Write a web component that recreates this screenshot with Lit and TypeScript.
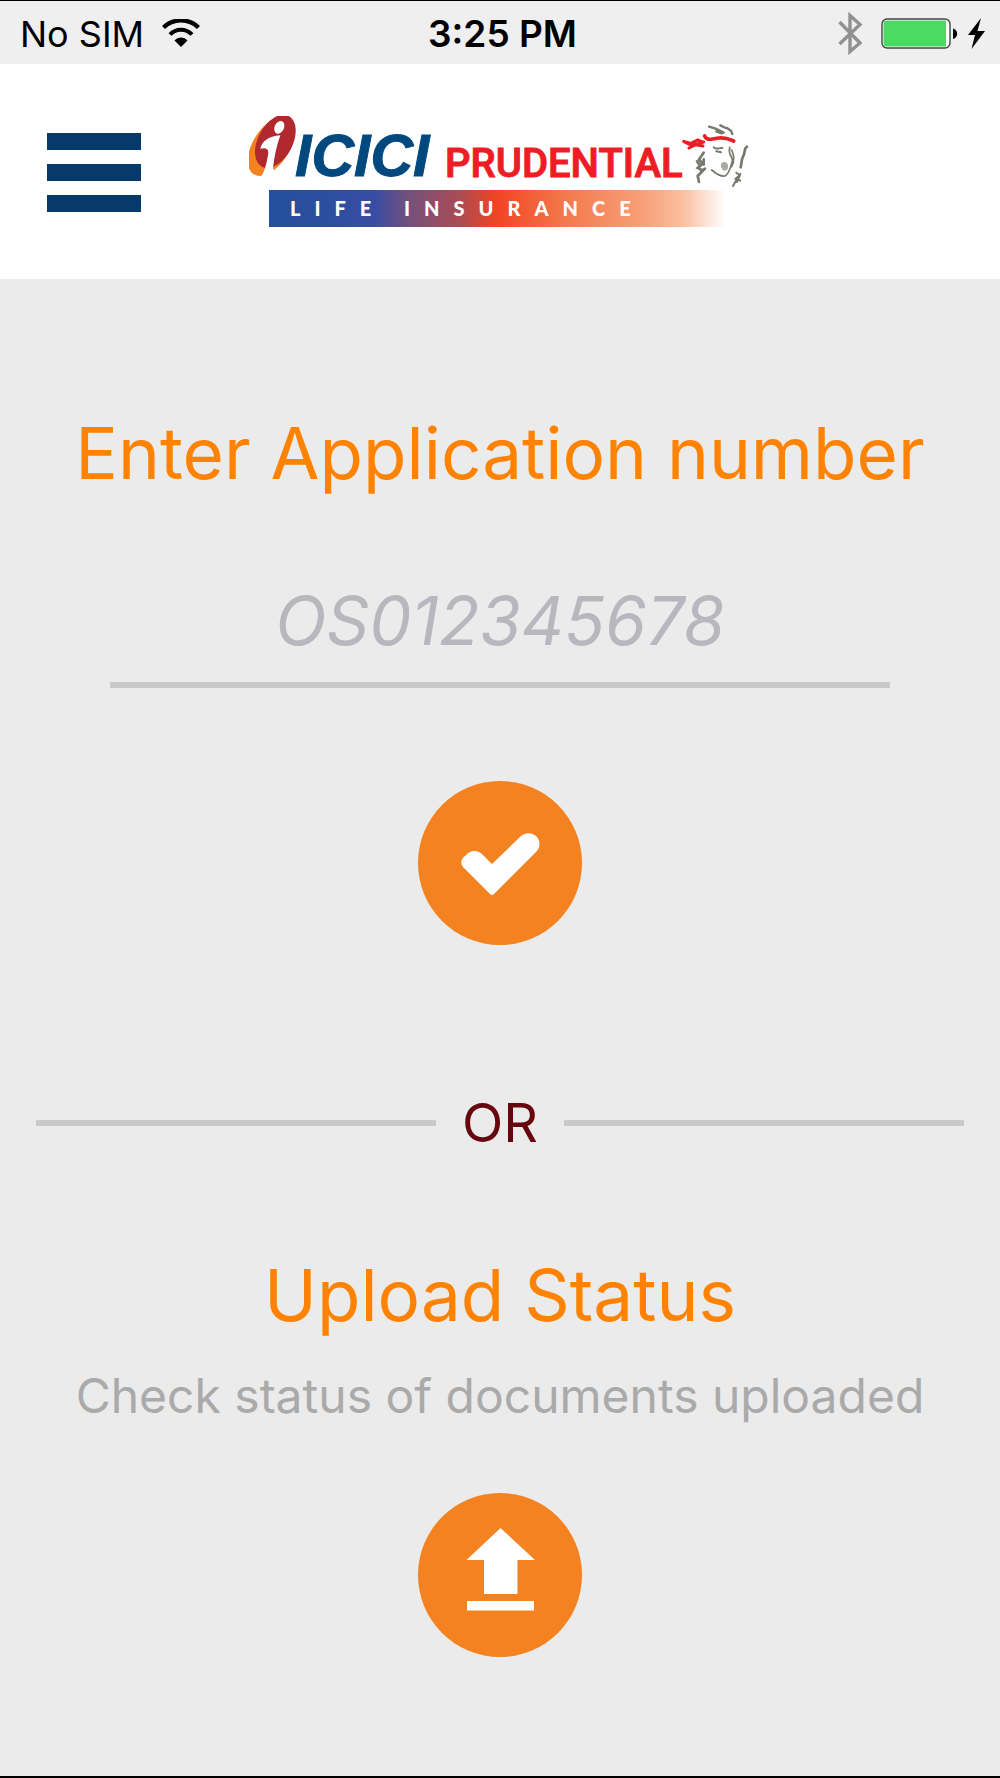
import { LitElement, html, css } from "lit";
import { customElement } from "lit/decorators.js";

@customElement("status-bar")
class StatusBar extends LitElement {
  static styles = css`
    :host {
      display: grid;
      grid-template-columns: 1fr auto 1fr;
      align-items: center;
      height: 63px;
      padding: 2px 15px 0 20px;
      box-sizing: border-box;
      background: #efefef;
      color: #000;
      font-size: 36px;
      line-height: 44px;
    }
    .side {
      display: flex;
      align-items: center;
      gap: 18px;
    }
    .end {
      justify-content: flex-end;
      gap: 10px;
    }
    .time {
      font-size: 37px;
      font-weight: 600;
    }
    .bluetooth {
      margin-right: 8px;
    }
    svg {
      display: block;
    }
  `;

  render() {
    return html`
      <div class="side">
        <span>No SIM</span>
        <svg width="38" height="29" viewBox="0 0 38 29" aria-label="Wi-Fi">
          <path d="M1.500 8.500C11-1 27-1 36.500 8.500" fill="none" stroke="#000" stroke-width="4.200" />
          <path d="M8 15.500C14 9 24 9 30 15.500" fill="none" stroke="#000" stroke-width="4" />
          <path d="M12.500 21.500C16 17.500 22 17.500 25.500 21.500L19 28z" />
        </svg>
      </div>
      <span class="time">3:25 PM</span>
      <div class="side end">
        <svg class="bluetooth" width="25" height="43" viewBox="0 0 25 43" aria-label="Bluetooth">
          <path d="M1.500 10L22 31 12 39.500V3.500L22 12.500 1.500 32" fill="none" stroke="#919191" stroke-width="3.400" />
        </svg>
        <svg width="77" height="32" viewBox="0 0 77 32" aria-label="Battery charging">
          <rect x="1" y="1" width="68" height="29" rx="5" fill="#fff" stroke="#444" stroke-width="1.400" />
          <path d="M5.500 2.500H65V28.500H5.500a3 3 0 0 1-3-3v-20a3 3 0 0 1 3-3z" fill="#4cd964" />
          <path d="M72 10.500c5.500 1 5.500 9.500 0 10.500z" />
        </svg>
        <svg width="17" height="31" viewBox="0 0 17 31" aria-hidden="true">
          <path d="M13 0L0 17h7L3.500 31 17 13H9.500z" />
        </svg>
      </div>
    `;
  }
}

@customElement("brand-logo")
class BrandLogo extends LitElement {
  static styles = css`
    :host {
      display: block;
    }
    svg {
      display: block;
    }
    .icici {
      font: italic 700 59px "Liberation Sans", sans-serif;
      fill: #00497f;
      stroke: #00497f;
      stroke-width: 1px;
    }
    .prudential {
      font: 500 40px "Roboto", "Liberation Sans", sans-serif;
      fill: #ee1c25;
      stroke: #ee1c25;
      stroke-width: 1px;
    }
    .tagline {
      font: 900 20px "Lato", sans-serif;
      letter-spacing: 14px;
      fill: #fff;
    }
  `;

  render() {
    return html`
      <svg width="502" height="112" viewBox="0 0 502 112" role="img" aria-label="ICICI Prudential Life Insurance">
        <defs>
          <linearGradient id="band">
            <stop offset="0" stop-color="#234f9b" />
            <stop offset=".23" stop-color="#364da3" />
            <stop offset=".3" stop-color="#70507f" />
            <stop offset=".42" stop-color="#ac4b52" />
            <stop offset=".5" stop-color="#f14522" />
            <stop offset=".65" stop-color="#f4794d" />
            <stop offset=".83" stop-color="#f8a37c" />
            <stop offset=".91" stop-color="#fbc0a2" />
            <stop offset="1" stop-color="#fff" />
          </linearGradient>
        </defs>
        <g transform="translate(-10 -16) scale(.33333)">
          <ellipse cx="97" cy="138" rx="55" ry="100" transform="rotate(32 97 138)" fill="#f58220" />
          <ellipse cx="109" cy="124" rx="52" ry="86" transform="rotate(28 109 124)" fill="#b1292f" />
          <ellipse cx="121" cy="82" rx="14" ry="20" transform="rotate(25 121 82)" fill="#fff" />
          <path d="M64 146C68 126 88 108 124 106C112 140 106 170 102 205L106 214 92 244 64 234C76 218 84 188 88 158C88 146 80 142 64 146z" fill="#fff" />
        </g>
        <text class="icici" x="46" y="60">ICICI</text>
        <text class="prudential" x="196" y="61">PRUDENTIAL</text>
        <g transform="translate(240 -16) scale(.33333)" fill="none" stroke-linecap="round">
          <path d="M584 124L606 130 626 120 640 126M600 144L620 134 642 138M586 126L608 136 644 126" stroke="#ee1c25" stroke-width="9" />
          <path d="M647 108C654 124 668 116 690 114S722 118 734 123" stroke="#ee1c25" stroke-width="11" />
          <path d="M660 80L680 86 704 98M694 76L710 84M714 84L726 92 730 102M682 94L698 100" stroke="#77796b" stroke-width="7" />
          <path d="M644 158L630 178 640 190 626 204 642 212 626 228 630 246M644 178V194M624 184L634 198M648 206L636 214" stroke="#77796b" stroke-width="8" />
          <path d="M674 142C682 150 690 144 700 144M682 154L696 157" stroke="#77796b" stroke-width="6" />
          <path d="M722 142C716 166 734 172 730 184C724 202 722 220 708 228C694 230 682 222 668 210M728 150C736 166 736 184 728 200" stroke="#77796b" stroke-width="5" />
          <path d="M700 194C708 184 716 194 712 206C706 212 698 204 700 194z" fill="#a9aaa0" stroke="#a9aaa0" stroke-width="8" />
          <path d="M774 140C764 146 770 156 762 170C756 182 758 192 755 202" stroke="#77796b" stroke-width="8" />
          <path d="M742 218L752 226 740 236 754 242M744 236L732 258M754 222L744 246" stroke="#77796b" stroke-width="6" />
        </g>
        <rect x="20" y="74" width="456" height="37" fill="url(#band)" />
        <text class="tagline" x="41" y="100">LIFE INSURANCE</text>
      </svg>
    `;
  }
}

@customElement("app-root")
class AppRoot extends LitElement {
  static styles = css`
    :host {
      display: flex;
      flex-direction: column;
      min-height: 100vh;
      box-sizing: border-box;
      border-top: 1px solid #000;
      border-bottom: 2px solid #000;
      background: #ebebeb;
      font-family: "Inter", "Liberation Sans", sans-serif;
    }
    .header {
      display: grid;
      grid-template-columns: 1fr auto 1fr;
      align-items: center;
      height: 215px;
      padding: 0 46px;
      background: #fff;
    }
    button {
      display: block;
      padding: 0;
      border: 0;
      background: none;
      cursor: pointer;
    }
    .menu {
      justify-self: start;
    }
    svg {
      display: block;
    }
    main,
    section {
      display: flex;
      flex-direction: column;
      align-items: center;
    }
    main {
      padding: 130px 36px 64px;
      align-items: stretch;
    }
    h1,
    h2,
    p {
      margin: 0;
      text-align: center;
    }
    h1,
    h2 {
      color: #ff8200;
      font-size: 71px;
      font-weight: 400;
      line-height: 88px;
    }
    .number {
      width: 84%;
      margin: 83px 0 93px;
      padding: 0 0 22px;
      box-sizing: border-box;
      height: 108px;
      border: 0;
      border-bottom: 6px solid #c9c9c9;
      border-radius: 0;
      outline: 0;
      background: none;
      color: #333;
      font: italic 400 67px/80px "Inter", "Liberation Sans", sans-serif;
      text-align: center;
    }
    .number::placeholder {
      color: #b8b7be;
      opacity: 1;
    }
    .divider {
      display: flex;
      align-items: center;
      gap: 26px;
      margin: 145px 0 95px;
      color: #67060f;
      font-size: 54px;
      line-height: 66px;
    }
    .rule {
      flex: 1;
      height: 6px;
      background: #c9c9c9;
    }
    .hint {
      margin: 28px 0 68px;
      color: #aaa;
      font-size: 48px;
      line-height: 58px;
    }
    .round {
      display: grid;
      place-items: center;
      width: 164px;
      height: 164px;
      border-radius: 50%;
      background: #f58220;
    }
  `;

  render() {
    return html`
      <status-bar></status-bar>
      <header class="header">
        <button class="menu" type="button" aria-label="Menu">
          <svg width="95" height="80" viewBox="0 0 95 80">
            <path d="M1 1h94v17H1zM1 32h94v17H1zM1 63h94v17H1z" fill="#053a6a" />
          </svg>
        </button>
        <brand-logo></brand-logo>
      </header>
      <main>
        <section>
          <h1><label for="number">Enter Application number</label></h1>
          <input id="number" class="number" type="text" placeholder="OS012345678" />
          <button class="round" type="button" aria-label="Submit">
            <svg width="164" height="164" viewBox="0 0 164 164">
              <path d="M47 75C53 68 60 69 65 74L74 83 102 56C107 51 114 51 119 56C123 61 122 67 118 71L76 113Q74 115 72 113L47 88C42 84 42 79 47 75z" fill="#fff" />
            </svg>
          </button>
        </section>
        <div class="divider">
          <span class="rule"></span>
          <span>OR</span>
          <span class="rule"></span>
        </div>
        <section>
          <h2>Upload Status</h2>
          <p class="hint">Check status of documents uploaded</p>
          <button class="round" type="button" aria-label="Check upload status">
            <svg width="164" height="164" viewBox="0 0 164 164">
              <path d="M82.500 35L117 67H99.500V101H66V67H48.500zM49 108h67v9.500H49z" fill="#fff" />
            </svg>
          </button>
        </section>
      </main>
    `;
  }
}
